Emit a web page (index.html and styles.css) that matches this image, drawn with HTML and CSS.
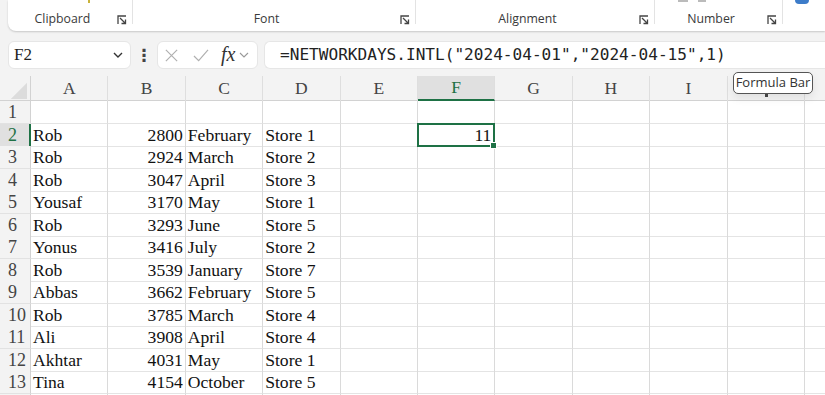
FILE: index.html
```html
<!DOCTYPE html>
<html>
<head>
<meta charset="utf-8">
<link rel="stylesheet" href="styles.css">
</head>
<body>
<div class="app">
  <div class="ribbon">
    <div class="group g-clip"><span class="label">Clipboard</span><svg class="launch" viewBox="0 0 10 10"><path d="M1 9V1h8M3 3l5.5 5.5M8.5 4.5v4h-4"/></svg><i class="peek yellow"></i></div>
    <div class="group g-font"><span class="label">Font</span><svg class="launch" viewBox="0 0 10 10"><path d="M1 9V1h8M3 3l5.5 5.5M8.5 4.5v4h-4"/></svg></div>
    <div class="group g-align"><span class="label">Alignment</span><svg class="launch" viewBox="0 0 10 10"><path d="M1 9V1h8M3 3l5.5 5.5M8.5 4.5v4h-4"/></svg></div>
    <div class="group g-num"><span class="label">Number</span><svg class="launch" viewBox="0 0 10 10"><path d="M1 9V1h8M3 3l5.5 5.5M8.5 4.5v4h-4"/></svg><i class="peek grey1"></i><i class="peek grey2"></i></div>
    <div class="group g-rest"><i class="peek blue"></i></div>
  </div>

  <div class="fbar">
    <div class="namebox"><span class="ref">F2</span><svg class="chev" viewBox="0 0 10 6"><path d="M1 1l4 4 4-4"/></svg></div>
    <div class="dots">⋮</div>
    <div class="fbtns">
      <svg class="ico" viewBox="0 0 16 16"><path d="M2 2l12 12M14 2L2 14"/></svg>
      <svg class="ico" viewBox="0 0 18 16"><path d="M1.5 8.5l5 5L16.5 2"/></svg>
      <span class="fx">fx</span>
      <svg class="chev2" viewBox="0 0 10 6"><path d="M1 1l4 4 4-4"/></svg>
    </div>
    <div class="formula">=NETWORKDAYS.INTL("2024-04-01","2024-04-15",1)</div>
  </div>

  <div class="sheet">
    <div class="row hdr">
      <div class="corner"><svg viewBox="0 0 20 20"><path d="M20 2V20H2Z"/></svg></div>
      <div class="ch">A</div><div class="ch">B</div><div class="ch">C</div><div class="ch">D</div><div class="ch">E</div>
      <div class="ch sel">F</div><div class="ch">G</div><div class="ch">H</div><div class="ch">I</div><div class="ch"></div><div class="ch"></div>
    </div>
    <div class="row"><div class="rh">1</div><div class="c"></div><div class="c"></div><div class="c"></div><div class="c"></div><div class="c"></div><div class="c"></div><div class="c"></div><div class="c"></div><div class="c"></div><div class="c"></div><div class="c"></div></div>
    <div class="row"><div class="rh sel">2</div><div class="c">Rob</div><div class="c n">2800</div><div class="c">February</div><div class="c">Store 1</div><div class="c"></div><div class="c n active">11<i class="handle"></i></div><div class="c"></div><div class="c"></div><div class="c"></div><div class="c"></div><div class="c"></div></div>
    <div class="row"><div class="rh">3</div><div class="c">Rob</div><div class="c n">2924</div><div class="c">March</div><div class="c">Store 2</div><div class="c"></div><div class="c"></div><div class="c"></div><div class="c"></div><div class="c"></div><div class="c"></div><div class="c"></div></div>
    <div class="row"><div class="rh">4</div><div class="c">Rob</div><div class="c n">3047</div><div class="c">April</div><div class="c">Store 3</div><div class="c"></div><div class="c"></div><div class="c"></div><div class="c"></div><div class="c"></div><div class="c"></div><div class="c"></div></div>
    <div class="row"><div class="rh">5</div><div class="c">Yousaf</div><div class="c n">3170</div><div class="c">May</div><div class="c">Store 1</div><div class="c"></div><div class="c"></div><div class="c"></div><div class="c"></div><div class="c"></div><div class="c"></div><div class="c"></div></div>
    <div class="row"><div class="rh">6</div><div class="c">Rob</div><div class="c n">3293</div><div class="c">June</div><div class="c">Store 5</div><div class="c"></div><div class="c"></div><div class="c"></div><div class="c"></div><div class="c"></div><div class="c"></div><div class="c"></div></div>
    <div class="row"><div class="rh">7</div><div class="c">Yonus</div><div class="c n">3416</div><div class="c">July</div><div class="c">Store 2</div><div class="c"></div><div class="c"></div><div class="c"></div><div class="c"></div><div class="c"></div><div class="c"></div><div class="c"></div></div>
    <div class="row"><div class="rh">8</div><div class="c">Rob</div><div class="c n">3539</div><div class="c">January</div><div class="c">Store 7</div><div class="c"></div><div class="c"></div><div class="c"></div><div class="c"></div><div class="c"></div><div class="c"></div><div class="c"></div></div>
    <div class="row"><div class="rh">9</div><div class="c">Abbas</div><div class="c n">3662</div><div class="c">February</div><div class="c">Store 5</div><div class="c"></div><div class="c"></div><div class="c"></div><div class="c"></div><div class="c"></div><div class="c"></div><div class="c"></div></div>
    <div class="row"><div class="rh">10</div><div class="c">Rob</div><div class="c n">3785</div><div class="c">March</div><div class="c">Store 4</div><div class="c"></div><div class="c"></div><div class="c"></div><div class="c"></div><div class="c"></div><div class="c"></div><div class="c"></div></div>
    <div class="row"><div class="rh">11</div><div class="c">Ali</div><div class="c n">3908</div><div class="c">April</div><div class="c">Store 4</div><div class="c"></div><div class="c"></div><div class="c"></div><div class="c"></div><div class="c"></div><div class="c"></div><div class="c"></div></div>
    <div class="row"><div class="rh">12</div><div class="c">Akhtar</div><div class="c n">4031</div><div class="c">May</div><div class="c">Store 1</div><div class="c"></div><div class="c"></div><div class="c"></div><div class="c"></div><div class="c"></div><div class="c"></div><div class="c"></div></div>
    <div class="row"><div class="rh">13</div><div class="c">Tina</div><div class="c n">4154</div><div class="c">October</div><div class="c">Store 5</div><div class="c"></div><div class="c"></div><div class="c"></div><div class="c"></div><div class="c"></div><div class="c"></div><div class="c"></div></div>
    <div class="row"><div class="rh"></div><div class="c"></div><div class="c"></div><div class="c"></div><div class="c"></div><div class="c"></div><div class="c"></div><div class="c"></div><div class="c"></div><div class="c"></div><div class="c"></div><div class="c"></div></div>

    <div class="tooltip">Formula Bar<i class="tick"></i></div>
  </div>
</div>
</body>
</html>
```
FILE: styles.css
```css
html, body {
  margin: 0;
  padding: 0;
}
body {
  width: 825px;
  height: 395px;
  overflow: hidden;
  background: #f3f3f3;
}
.app {
  width: 825px;
  height: 395px;
  overflow: hidden;
  display: flex;
  flex-direction: column;
}

/* Ribbon */
.ribbon {
  height: 31px;
  margin-left: 8px;
  background: #fff;
  border-bottom-left-radius: 8px;
  box-shadow: 0 1px 2px rgba(0,0,0,0.18);
  display: flex;
  flex-shrink: 0;
}
.group {
  position: relative;
  display: flex;
  align-items: flex-start;
  padding-top: 10px;
  padding-right: 5px;
  box-sizing: border-box;
  height: 24px;
  border-right: 1px solid #e3e3e3;
  font-family: "Segoe UI", "Open Sans", "Noto Sans", sans-serif;
  font-size: 12.3px;
  color: #3a3a3a;
}
.g-clip { width: 125px; }
.g-font { width: 283px; }
.g-align { width: 239px; }
.g-num { width: 128px; }
.g-rest { flex: 1; border-right: none; }
.label {
  flex: 1;
  text-align: center;
  line-height: 18px;
}
.launch {
  width: 10px;
  height: 10px;
  margin-top: 5px;
  fill: none;
  stroke: #444;
  stroke-width: 1.3;
}
.peek {
  position: absolute;
  top: 0;
  height: 3px;
}
.yellow { left: 80px; width: 2px; background: #c9b33a; }
.grey1 { left: 23px; width: 10px; height: 2px; background: #bbb; }
.grey2 { left: 43px; width: 8px; height: 2px; background: #bbb; }
.blue { left: 12px; width: 14px; height: 4px; background: #3d7cc9; border-radius: 0 0 4px 4px; }

/* Formula bar */
.fbar {
  display: flex;
  align-items: center;
  height: 28px;
  margin-top: 10px;
  padding-left: 8px;
  flex-shrink: 0;
}
.namebox {
  width: 123px;
  height: 28px;
  box-sizing: border-box;
  background: #fff;
  border: 1px solid #e6e6e6;
  border-radius: 6px;
  display: flex;
  align-items: center;
  padding: 0 5px 0 5px;
}
.ref {
  flex: 1;
  font-family: "Liberation Serif", "Times New Roman", serif;
  font-size: 17px;
  color: #222;
}
.chev {
  width: 10px;
  height: 6px;
  fill: none;
  stroke: #333;
  stroke-width: 1.4;
  margin-right: 2px;
}
.dots {
  width: 26px;
  text-align: center;
  font-family: "DejaVu Sans", sans-serif;
  font-weight: bold;
  font-size: 17px;
  color: #444;
}
.fbtns {
  width: 101px;
  height: 28px;
  box-sizing: border-box;
  background: #fff;
  border: 1px solid #e6e6e6;
  border-radius: 6px;
  display: flex;
  align-items: center;
  padding-left: 6px;
  gap: 0;
}
.ico {
  width: 15px;
  height: 15px;
  fill: none;
  stroke: #b0b0b0;
  stroke-width: 1.3;
  margin-right: 13px;
}
.ico + .ico {
  width: 18px;
  margin-right: 11px;
}
.fx {
  font-family: "Liberation Serif", "Times New Roman", serif;
  font-style: italic;
  font-size: 20px;
  color: #333;
  margin-top: -2px;
}
.chev2 {
  width: 10px;
  height: 6px;
  fill: none;
  stroke: #999;
  stroke-width: 1.1;
  margin-left: 4px;
}
.formula {
  flex: 1;
  height: 28px;
  margin-left: 6px;
  box-sizing: border-box;
  background: #fff;
  border: 1px solid #e6e6e6;
  border-right: none;
  border-radius: 6px 0 0 6px;
  padding-left: 15px;
  line-height: 26px;
  font-family: "DejaVu Sans Mono", "Liberation Mono", monospace;
  font-size: 16.1px;
  color: #222;
  white-space: nowrap;
}

/* Sheet */
.sheet {
  position: relative;
  margin-top: 7px;
  background: #fff;
  flex: 1;
}
.row {
  display: grid;
  grid-template-columns: 31px repeat(11, 77.4px);
  height: 22.5px;
}
.row.hdr {
  height: 24px;
  background: #f3f3f3;
  border-bottom: 1px solid #d2d2d2;
}
.corner {
  border-right: 1px solid #d2d2d2;
  position: relative;
}
.corner svg {
  position: absolute;
  right: 3px;
  bottom: 2px;
  width: 18px;
  height: 18px;
  fill: #dcdcdc;
}
.ch {
  font-family: "Liberation Serif", "Times New Roman", serif;
  font-size: 17.5px;
  color: #444;
  text-align: center;
  line-height: 24px;
  border-right: 1px solid #dedede;
}
.ch.sel {
  background: #e0e0e0;
  color: #1e7145;
  border-bottom: 2px solid #1e7145;
  line-height: 23px;
}
.rh {
  background: #f3f3f3;
  border-right: 1px solid #d2d2d2;
  border-bottom: 1px solid #e2e2e2;
  font-family: "Liberation Serif", "Times New Roman", serif;
  font-size: 18px;
  color: #444;
  padding-left: 8px;
  line-height: 22px;
  box-sizing: border-box;
  white-space: nowrap;
}
.rh.sel {
  background: #e0e0e0;
  color: #1e7145;
  border-right: 2px solid #1e7145;
}
.c {
  border-right: 1px solid #dadada;
  border-bottom: 1px solid #e4e4e4;
  font-family: "Liberation Serif", "Times New Roman", serif;
  font-size: 17.6px;
  color: #111;
  padding: 0 2px 0 2px;
  line-height: 22px;
  white-space: nowrap;
  overflow: hidden;
  box-sizing: border-box;
}
.c.n { text-align: right; }
.c.active {
  position: relative;
  overflow: visible;
  padding-right: 3px;
}
.c.active::before {
  content: "";
  position: absolute;
  left: -1px;
  top: -1px;
  right: -1px;
  bottom: -1px;
  border: 2px solid #1e7145;
}
.handle {
  position: absolute;
  right: -3px;
  bottom: -3px;
  width: 5px;
  height: 5px;
  background: #1e7145;
  border: 1px solid #fff;
  z-index: 2;
}

.tooltip {
  position: absolute;
  left: 733px;
  top: -4px;
  width: 80px;
  height: 22px;
  box-sizing: border-box;
  border: 1.5px solid #555;
  border-radius: 5px;
  background: #fff;
  font-family: "Segoe UI", "Open Sans", "Noto Sans", sans-serif;
  font-size: 13px;
  color: #333;
  text-align: center;
  line-height: 19px;
  white-space: nowrap;
  box-shadow: 0 4px 10px rgba(0,0,0,0.08);
}
.tick {
  position: absolute;
  left: 31px;
  bottom: -4px;
  width: 3px;
  height: 3px;
  background: #444;
}
```
